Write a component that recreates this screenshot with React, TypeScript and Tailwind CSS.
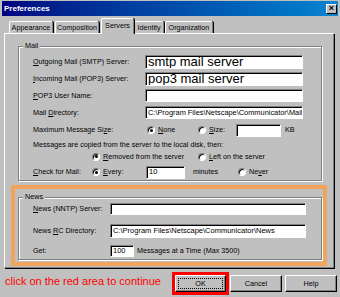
import type { ReactNode } from 'react'

function U({ children }: { children: ReactNode }) {
  return <span className="underline underline-offset-[1px]">{children}</span>
}

function Field({ className = '', children }: { className?: string; children?: ReactNode }) {
  return (
    <div
      className={`flex shrink-0 items-center overflow-hidden whitespace-nowrap border border-t-[#808080] border-l-[#808080] border-r-white border-b-white bg-white pl-[2px] shadow-[inset_1px_1px_0_#000] ${className}`}
    >
      {children}
    </div>
  )
}

function Radio({ on = false }: { on?: boolean }) {
  return (
    <span className="flex h-[8px] w-[8px] shrink-0 items-center justify-center rounded-full border border-t-[#808080] border-l-[#808080] border-r-white border-b-white bg-white shadow-[inset_1px_1px_0_#000]">
      {on && <span className="h-[3px] w-[3px] rounded-full bg-black" />}
    </span>
  )
}

function Group({ label, className = '', children }: { label: string; className?: string; children: ReactNode }) {
  return (
    <div className={`relative border border-[#808080] shadow-[inset_1px_1px_0_#fff,1px_1px_0_#fff] ${className}`}>
      {/* legend sits on the top border */}
      <span className="absolute left-[4px] top-[-6px] bg-[#c0c0c0] px-[2px] leading-[10px]">{label}</span>
      {children}
    </div>
  )
}

function Tab({ label, w, ml = '', selected = false }: { label: string; w: string; ml?: string; selected?: boolean }) {
  return (
    <div
      className={`flex shrink-0 items-center justify-center rounded-t-[2px] border-l border-t border-l-white border-t-white border-r border-r-[#808080] bg-[#c0c0c0] shadow-[1px_0_0_#000] ${w} ${ml} ${
        selected ? 'relative z-10 -mb-px h-[16px] pb-[2px]' : 'h-[12px] pt-[1px]'
      }`}
    >
      {label}
    </div>
  )
}

function Button({ label, focus = false }: { label: string; focus?: boolean }) {
  return (
    <div className="flex h-[17px] w-full items-center justify-center border border-t-white border-l-white border-r-black border-b-black bg-[#c0c0c0] p-[2px] shadow-[inset_-1px_-1px_0_#808080]">
      <div
        className={`flex h-full w-full items-center justify-center ${focus ? 'border border-dotted border-black' : ''}`}
      >
        {label}
      </div>
    </div>
  )
}

export default function App() {
  return (
    <div className="h-[297px] w-[340px] overflow-hidden bg-[#c0c0c0] px-[2px] pt-[1px] font-['Liberation_Sans',Arial,sans-serif] text-[7.2px] leading-none text-black">
      {/* Title bar */}
      <div className="flex h-[15px] items-center justify-between bg-linear-to-r from-[#000080] to-[#1084d0] pl-[2px] pr-[1px]">
        <span className="text-[8px] font-bold text-white">Preferences</span>
        <span className="flex h-[10px] w-[11px] items-center justify-center border border-t-white border-l-white border-r-black border-b-black bg-[#c0c0c0] text-[9px] font-bold leading-none">
          ×
        </span>
      </div>

      {/* Tabs */}
      <div className="flex h-[17px] items-end pl-[7px]">
        <Tab label="Appearance" w="w-[44px]" />
        <Tab label="Composition" w="w-[44px]" ml="ml-[2px]" />
        <Tab label="Servers" w="w-[33px]" ml="ml-[2px]" selected />
        <Tab label="Identity" w="w-[30px]" />
        <Tab label="Organization" w="w-[48px]" ml="ml-[1px]" />
      </div>

      {/* Panel */}
      <div className="ml-[2px] h-[235px] w-[330px] border border-t-white border-l-white border-r-[#808080] border-b-[#808080] shadow-[1px_1px_0_#000]">
        <Group label="Mail" className="ml-[13px] mt-[12px] h-[135px] w-[304px] pl-[14px] pt-[6px]">
          <div className="flex h-[17px] items-center">
            <span className="w-[112px]"><U>O</U>utgoing Mail (SMTP) Server:</span>
            <Field className="h-[14px] w-[158px] text-[13px] leading-[12px]">smtp mail server</Field>
          </div>
          <div className="flex h-[17px] items-center">
            <span className="w-[112px]"><U>I</U>ncoming Mail (POP3) Server:</span>
            <Field className="h-[14px] w-[158px] text-[13px] leading-[12px]">pop3 mail server</Field>
          </div>
          <div className="flex h-[17px] items-center">
            <span className="w-[112px]"><U>P</U>OP3 User Name:</span>
            <Field className="h-[13px] w-[158px]" />
          </div>
          <div className="flex h-[17px] items-center">
            <span className="w-[112px]">Mail <U>D</U>irectory:</span>
            <Field className="h-[13px] w-[158px] pl-[1px] text-[7.4px]">C:\Program Files\Netscape\Communicator\Mail</Field>
          </div>
          <div className="flex h-[18px] items-center">
            <span className="w-[114px]">Maximum Message Si<U>z</U>e:</span>
            <span className="flex w-[51px] items-center gap-[3px]">
              <Radio on />
              <span><U>N</U>one</span>
            </span>
            <span className="flex w-[38px] items-center gap-[3px]">
              <Radio />
              <span><U>S</U>ize:</span>
            </span>
            <Field className="h-[13px] w-[45px]" />
            <span className="ml-[4px]">KB</span>
          </div>
          <div className="flex h-[12px] items-center">Messages are copied from the server to the local disk, then:</div>
          <div className="flex h-[11px] items-center">
            <span className="w-[59px]" />
            <span className="flex w-[106px] items-center gap-[3px]">
              <Radio on />
              <span><U>R</U>emoved from the server</span>
            </span>
            <span className="flex items-center gap-[3px]">
              <Radio />
              <span><U>L</U>eft on the server</span>
            </span>
          </div>
          <div className="flex h-[20px] items-center">
            <span className="w-[59px]"><U>C</U>heck for Mail:</span>
            <span className="flex w-[54px] items-center gap-[3px]">
              <Radio on />
              <span><U>E</U>very:</span>
            </span>
            <Field className="h-[13px] w-[39px] text-[7.5px]">10</Field>
            <span className="ml-[8px] w-[45px]">minutes</span>
            <span className="flex items-center gap-[3px]">
              <Radio />
              <span>Ne<U>v</U>er</span>
            </span>
          </div>
        </Group>

        {/* Highlighted news section */}
        <div className="ml-[6px] mt-[4px] h-[81px] w-[316px] border-[4px] border-[#f0a45c] pl-[3px] pt-[8px]">
          <Group label="News" className="h-[63px] w-[304px] pl-[14px]">
            <div className="flex h-[22px] items-center">
              <span className="w-[77px]"><U>N</U>ews (NNTP) Server:</span>
              <Field className="h-[12px] w-[196px]" />
            </div>
            <div className="flex h-[22px] items-center">
              <span className="w-[77px]">News <U>R</U>C Directory:</span>
              <Field className="h-[14px] w-[196px] pl-[1px] text-[7.5px]">C:\Program Files\Netscape\Communicator\News</Field>
            </div>
            <div className="flex h-[17px] items-center">
              <span className="w-[77px]">Get:</span>
              <Field className="h-[12px] w-[24px] text-[7.5px]">100</Field>
              <span className="ml-[3px]">Messages at a Time (Max 3500)</span>
            </div>
          </Group>
        </div>
      </div>

      {/* Footer */}
      <div className="flex h-[28px] items-start">
        <div className="w-[170px] pl-[3px] pt-[7px] text-[11px] leading-[13px] text-[#ff0000]">
          click on the red area to continue
        </div>
        <div className="mt-[4px] h-[23px] w-[57px] border-[3px] border-[#ff0000]">
          <Button label="OK" focus />
        </div>
        <div className="ml-[1px] mt-[7px] w-[52px]">
          <Button label="Cancel" />
        </div>
        <div className="ml-[3px] mt-[7px] w-[52px]">
          <Button label="Help" />
        </div>
      </div>
    </div>
  )
}
